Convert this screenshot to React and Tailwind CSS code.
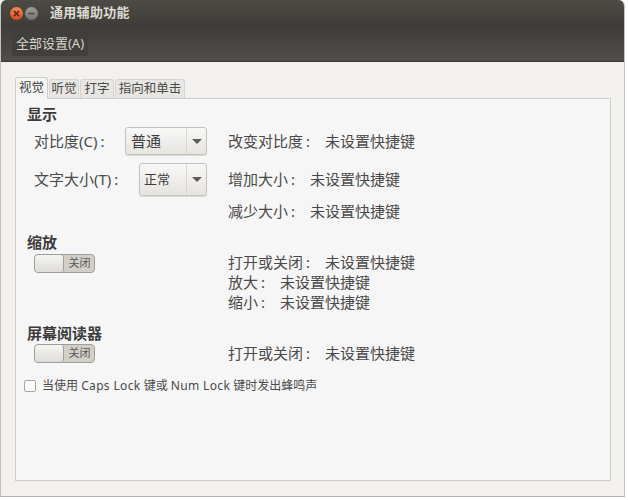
import { FiX, FiMinus } from 'react-icons/fi';

const font = { fontFamily: '"Noto Sans", "Noto Sans CJK SC", sans-serif' };

function Heading({ children, className = '' }) {
  return <div className={`flex h-5 items-center pb-[2px] text-[15px] font-bold text-[#3c3c3c] ${className}`}>{children}</div>;
}

function Shortcut({ label, className = '' }) {
  return (
    <div className={`flex items-center text-[15px] text-[#4a4a4a] ${className}`}>
      <span>{label}</span>
      <span className="ml-[3px]">:</span>
      <span className="ml-[15px]">未设置快捷键</span>
    </div>
  );
}

function Label({ children, className = '' }) {
  return (
    <span className={`flex text-[15px] text-[#4a4a4a] ${className}`}>
      {children}
      <span className="ml-[3px]">:</span>
    </span>
  );
}

function Combo({ value, className = '', textClass = '' }) {
  return (
    <div className={`flex items-center rounded-[3px] border border-[#c4c2bc] bg-gradient-to-b from-[#f8f8f7] to-[#e6e4e1] shadow-[0_1px_0_#dcdad6] ${className}`}>
      <span className={`flex-1 text-[#3c3c3c] ${textClass}`}>{value}</span>
      <span className="h-full w-px bg-[#d8d6d2]" />
      <span className="flex w-[19px] justify-center">
        <span className="h-0 w-0 border-x-[5px] border-t-[5px] border-x-transparent border-t-[#5f5d59]" />
      </span>
    </div>
  );
}

function Switch() {
  return (
    <div className="flex h-[19px] w-[61px] overflow-hidden rounded-[4px] border border-[#a09e99] bg-[#d2cfc9]">
      <div className="w-[29px] rounded-[3px] border-r border-[#a09e99] bg-gradient-to-b from-[#f5f5f4] to-[#dedcd9]" />
      <div className="flex flex-1 items-center justify-center pl-px text-[11px] text-[#5a5855]">关闭</div>
    </div>
  );
}

function Tab({ children, active, className = '' }) {
  return (
    <div
      className={
        active
          ? `z-10 -mb-px flex h-[22px] items-center justify-center rounded-t-[3px] border border-b-0 border-[#cfcdc8] bg-[#f6f6f6] text-[12.5px] text-[#3c3c3c] ${className}`
          : `flex h-[19px] items-center justify-center rounded-t-[3px] border border-b-0 border-[#d6d4cf] bg-[#e8e6e3] text-[12.5px] text-[#4a4a4a] ${className}`
      }
    >
      {children}
    </div>
  );
}

export default function App() {
  return (
    <div className="h-[500px] w-[628px] overflow-hidden bg-white" style={font}>
      <div className="flex h-[497px] w-[625px] flex-col overflow-hidden rounded-t-[6px] border-x border-b border-x-[#c4c2bd] border-b-[#b5b3ae] bg-[#f2f1ef]">
        {/* title bar */}
        <div className="flex h-[26px] items-center bg-gradient-to-b from-[#4c4b46] to-[#3e3d39] pl-[9px]">
          <span className="flex h-[13px] w-[13px] items-center justify-center rounded-full bg-gradient-to-b from-[#f58a5a] to-[#d9481c] text-[#5a2410]">
            <FiX size={9} strokeWidth={4} />
          </span>
          <span className="ml-[2px] flex h-[13px] w-[13px] items-center justify-center rounded-full bg-gradient-to-b from-[#a09e98] to-[#75736d] text-[#4b4a45]">
            <FiMinus size={9} strokeWidth={4} />
          </span>
          <span className="ml-[12px] text-[13px] font-bold tracking-[0.3px] text-[#dfdbd2]">通用辅助功能</span>
        </div>

        {/* toolbar */}
        <div className="flex h-[36px] items-center border-b border-[#3a3935] bg-gradient-to-b from-[#3e3d39] to-[#4f4e49] pl-[11px]">
          <div className="flex h-[24px] w-[76px] items-center justify-center rounded-[3px] bg-[#403f3b] text-[13px] text-[#d8d4cc]">
            全部设置(A)
          </div>
        </div>

        {/* tabs */}
        <div className="flex flex-1 flex-col pb-[15px] pl-[14px] pr-[13px] pt-[14px]">
          <div className="flex h-[22px] items-end gap-px">
            <Tab active className="w-[33px]">视觉</Tab>
            <Tab className="w-[30px]">听觉</Tab>
            <Tab className="w-[34px]">打字</Tab>
            <Tab className="w-[70px]">指向和单击</Tab>
          </div>

          {/* panel */}
          <div className="flex-1 border border-[#cfcdc8] bg-[#f6f6f6] pl-[11px] pt-[6px]">
            <Heading>显示</Heading>

            <div className="mt-[2px] flex h-[28px] items-center">
              <div className="flex w-[201px] items-center pl-[7px]">
                <Label className="w-[91px]">对比度(C)</Label>
                <Combo value="普通" className="h-[28px] w-[82px]" textClass="pl-[5px] text-[15px]" />
              </div>
              <Shortcut label="改变对比度" />
            </div>

            <div className="mt-[8px] flex h-[33px] items-center">
              <div className="flex w-[201px] items-center pl-[7px]">
                <Label className="w-[105px]">文字大小(T)</Label>
                <Combo value="正常" className="h-[33px] w-[68px]" textClass="pl-1 text-[13px]" />
              </div>
              <Shortcut label="增加大小" />
            </div>

            <div className="flex h-[31px] items-center pl-[201px]">
              <Shortcut label="减少大小" />
            </div>

            <Heading className="mt-[6px]">缩放</Heading>
            <div className="flex">
              <div className="w-[201px] pl-[7px] pt-px">
                <Switch />
              </div>
              <div className="-mt-px flex flex-col">
                <Shortcut label="打开或关闭" className="h-[20px]" />
                <Shortcut label="放大" className="h-[20px]" />
                <Shortcut label="缩小" className="h-[20px]" />
              </div>
            </div>

            <Heading className="mt-[12px]">屏幕阅读器</Heading>
            <div className="flex">
              <div className="w-[201px] pl-[7px]">
                <Switch />
              </div>
              <Shortcut label="打开或关闭" className="-mt-px h-[20px]" />
            </div>

            <div className="-ml-[3px] mt-[14px] flex items-center">
              <span className="h-[12px] w-[12px] rounded-[2px] border border-[#a8a6a1] bg-white" />
              <span className="ml-[6px] text-[12px] text-[#4a4a4a]">
                当使用 <span className="tracking-[0.35px]">Caps Lock</span> 键或 <span className="tracking-[0.35px]">Num Lock</span> 键时发出蜂鸣声
              </span>
            </div>
          </div>
        </div>
      </div>
    </div>
  );
}
